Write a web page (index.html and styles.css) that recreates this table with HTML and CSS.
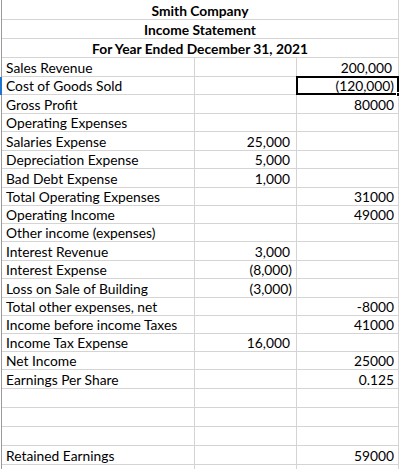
FILE: index.html
```html
<!DOCTYPE html>
<html lang="en">
<head>
<meta charset="utf-8">
<title>Smith Company Income Statement</title>
<link rel="stylesheet" href="styles.css">
</head>
<body>
<div class="sheet">
  <div class="rh"></div><div class="c t">Smith Company</div>
  <div class="rh"></div><div class="c t">Income Statement</div>
  <div class="rh"></div><div class="c t">For Year Ended December 31, 2021</div>

  <div class="rh"></div><div class="c">Sales Revenue</div><div class="c"></div><div class="c n f">200,000</div>
  <div class="rh act"></div><div class="c">Cost of Goods Sold</div><div class="c"></div><div class="c n sel">(120,000)</div>
  <div class="rh"></div><div class="c">Gross Profit</div><div class="c"></div><div class="c n">80000</div>
  <div class="rh"></div><div class="c">Operating Expenses</div><div class="c"></div><div class="c"></div>
  <div class="rh"></div><div class="c">Salaries Expense</div><div class="c n f">25,000</div><div class="c"></div>
  <div class="rh"></div><div class="c">Depreciation Expense</div><div class="c n f">5,000</div><div class="c"></div>
  <div class="rh"></div><div class="c">Bad Debt Expense</div><div class="c n f">1,000</div><div class="c"></div>
  <div class="rh"></div><div class="c">Total Operating Expenses</div><div class="c"></div><div class="c n">31000</div>
  <div class="rh"></div><div class="c">Operating Income</div><div class="c"></div><div class="c n">49000</div>
  <div class="rh"></div><div class="c">Other income (expenses)</div><div class="c"></div><div class="c"></div>
  <div class="rh"></div><div class="c">Interest Revenue</div><div class="c n f">3,000</div><div class="c"></div>
  <div class="rh"></div><div class="c">Interest Expense</div><div class="c n">(8,000)</div><div class="c"></div>
  <div class="rh"></div><div class="c">Loss on Sale of Building</div><div class="c n">(3,000)</div><div class="c"></div>
  <div class="rh"></div><div class="c">Total other expenses, net</div><div class="c"></div><div class="c n">-8000</div>
  <div class="rh"></div><div class="c">Income before income Taxes</div><div class="c"></div><div class="c n">41000</div>
  <div class="rh"></div><div class="c">Income Tax Expense</div><div class="c n f">16,000</div><div class="c"></div>
  <div class="rh"></div><div class="c">Net Income</div><div class="c"></div><div class="c n">25000</div>
  <div class="rh"></div><div class="c">Earnings Per Share</div><div class="c"></div><div class="c n">0.125</div>
  <div class="rh"></div><div class="c"></div><div class="c"></div><div class="c"></div>
  <div class="rh"></div><div class="c"></div><div class="c"></div><div class="c"></div>
  <div class="rh"></div><div class="c"></div><div class="c"></div><div class="c"></div>
  <div class="rh"></div><div class="c">Retained Earnings</div><div class="c"></div><div class="c n">59000</div>
  <div class="rh"></div><div class="c"></div><div class="c"></div><div class="c"></div>
</div>
</body>
</html>
```

FILE: styles.css
```css
html, body {
  margin: 0;
  padding: 0;
  background: #ffffff;
}

body {
  width: 399px;
  height: 469px;
  overflow: hidden;
  font-family: Lato, "Liberation Sans", sans-serif;
  font-size: 13.8px;
  color: #000000;
}

.sheet {
  display: grid;
  grid-template-columns: 2px 193px 102px 102px;
  grid-template-rows:
    20px 19px 19px 19px 18px 19px 18px 19px 18px 19px
    18px 18px 18px 19px 18px 19px 18px 18px 18px 18px
    19px 19px 19px 19px 19px 19px;
}

.rh {
  border-right: 1px solid #9a9a9a;
}

.rh.act {
  border-right: none;
  background: #1f74d0;
}

.c {
  display: flex;
  align-items: flex-end;
  padding: 0 4px 1px 4px;
  border-right: 1px solid #d4d4d4;
  border-bottom: 1px solid #d4d4d4;
  white-space: nowrap;
  overflow: hidden;
  line-height: 15px;
  min-width: 0;
}

.t {
  grid-column: span 3;
  justify-content: center;
  font-weight: 700;
}

.n {
  justify-content: flex-end;
}

.f {
  padding-right: 6px;
}

.sel {
  position: relative;
  overflow: visible;
}

.sel::before {
  content: "";
  position: absolute;
  left: -1px;
  top: -1px;
  right: -1px;
  bottom: -1px;
  border: 2px solid #000000;
}

.sel::after {
  content: "";
  position: absolute;
  right: -3px;
  bottom: -3px;
  width: 5px;
  height: 5px;
  background: #000000;
  border: 1px solid #ffffff;
  box-sizing: border-box;
}
```
